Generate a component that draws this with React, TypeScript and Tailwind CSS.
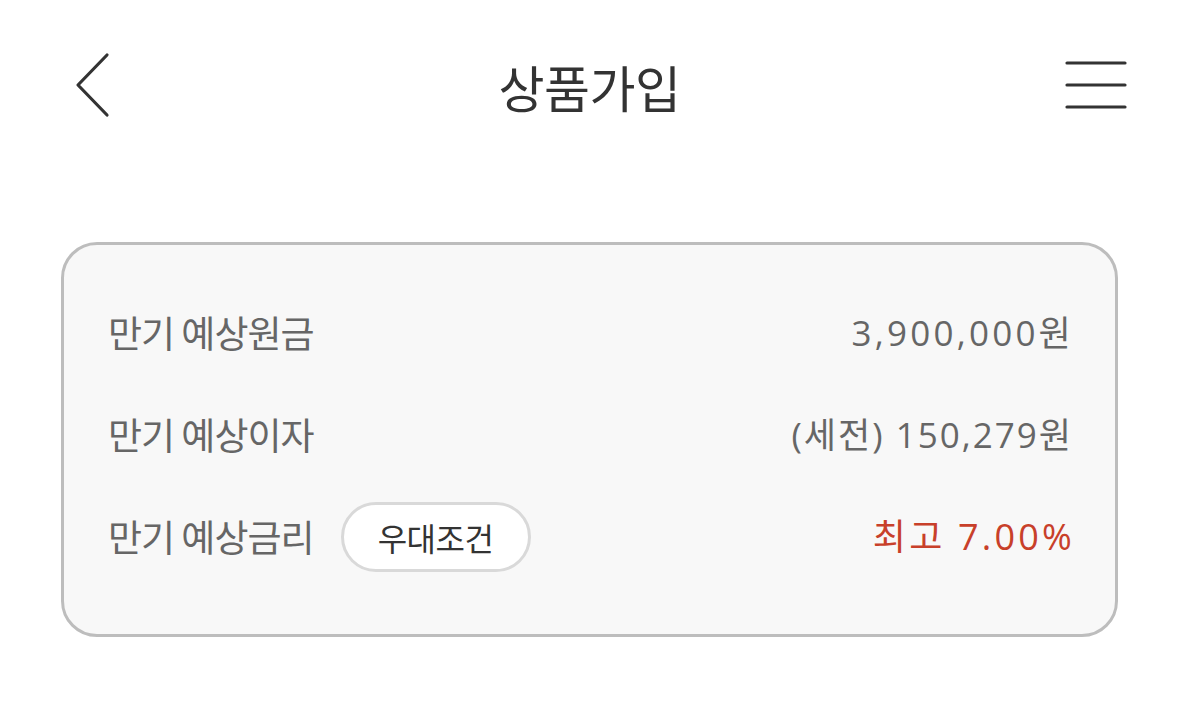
import { useState } from 'react';

const font = { fontFamily: '"Noto Sans CJK KR", "Noto Sans", sans-serif' };
const numFont = { fontFamily: '"Open Sans", "Noto Sans CJK KR", sans-serif' };

const BackIcon = () => (
  <svg width="40" height="66" viewBox="0 0 40 66" fill="none">
    <path d="M33 3 L4 33 L33 63" stroke="#333" strokeWidth="3.2" strokeLinecap="round" strokeLinejoin="round" />
  </svg>
);

const MenuIcon = () => (
  <svg width="62" height="52" viewBox="0 0 62 52" fill="none">
    <path d="M2 4 H60 M2 26 H60 M2 48 H60" stroke="#333" strokeWidth="3.2" strokeLinecap="round" />
  </svg>
);

type RowProps = {
  label: string;
  children?: React.ReactNode;
  value: React.ReactNode;
  valueClass: string;
};

const Row = ({ label, children, value, valueClass }: RowProps) => (
  <div className="flex h-[102px] items-center justify-between">
    <div className="flex items-center gap-[27px]">
      <span className="text-[37px] tracking-[-1px] text-[#666]">{label}</span>
      {children}
    </div>
    <div className={valueClass} style={numFont}>
      {value}
    </div>
  </div>
);

export default function App() {
  const [open, setOpen] = useState(false);

  return (
    <div className="h-[703px] w-[1179px] bg-white" style={font}>
      {/* 헤더 */}
      <header className="relative flex h-[176px] items-center justify-center">
        <button className="absolute left-[74px] top-[52px]">
          <BackIcon />
        </button>
        <h1 className="-mt-[4px] text-[50px] font-normal tracking-[-0.5px] text-[#333]">상품가입</h1>
        <button className="absolute right-[52px] top-[59px]">
          <MenuIcon />
        </button>
      </header>

      {/* 만기 정보 카드 */}
      <section className="mx-[61px] mt-[66px] rounded-[36px] border-[3px] border-[#bdbdbd] bg-[#f8f8f8] px-[44px] pb-[46px] pt-[37px]">
        <Row
          label="만기 예상원금"
          value="3,900,000원"
          valueClass="-mr-[3px] text-[35px] tracking-[3.2px] text-[#666]"
        />
        <Row
          label="만기 예상이자"
          value="(세전) 150,279원"
          valueClass="-mr-[2px] text-[35px] tracking-[2px] text-[#666]"
        />
        <Row
          label="만기 예상금리"
          value="최고 7.00%"
          valueClass="-mr-[4px] text-[36px] tracking-[3.2px] text-[#c8402a]"
        >
          <button
            onClick={() => setOpen(!open)}
            className="flex h-[70px] w-[190px] items-center justify-center rounded-full border-[3px] border-[#d9d9d9] bg-white text-[32px] tracking-[-0.5px] text-[#333]"
          >
            우대조건
          </button>
        </Row>
      </section>
    </div>
  );
}
